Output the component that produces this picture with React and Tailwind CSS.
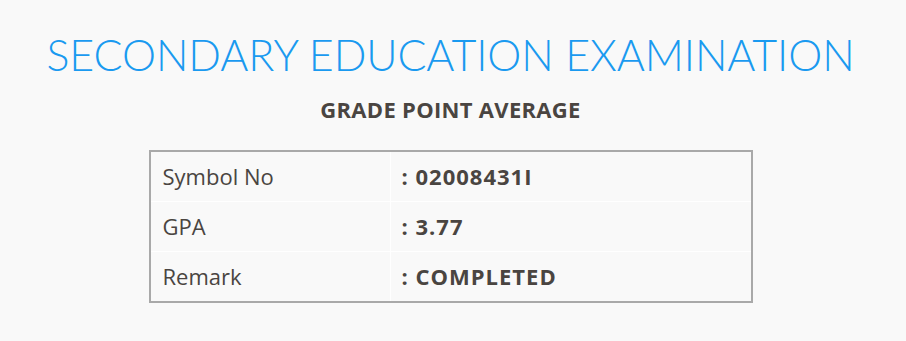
export default function App() {
  const rows = [
    ['Symbol No', '02008431I'],
    ['GPA', '3.77'],
    ['Remark', 'COMPLETED'],
  ]

  return (
    <div className="w-[906px] h-[341px] bg-[#f9f9f9] font-['Open_Sans',sans-serif] text-[#4a4541]">
      <div className="w-[901px] flex flex-col items-center">
        <h1 className="mt-[29px] text-[43px] leading-[52px] font-light tracking-[-0.1px] text-[#1a9af0] font-['Lato',sans-serif]">
          SECONDARY EDUCATION EXAMINATION
        </h1>
        <h2 className="mt-[14px] text-[22px] leading-[28px] font-bold tracking-[0.3px]">GRADE POINT AVERAGE</h2>
        <div className="mt-[27px] w-[604px] border-2 border-[#a9a9a9]">
          {rows.map(([label, value], i) => (
            <div
              key={label}
              className={`flex items-center ${i > 0 ? 'h-[50px] border-t border-white' : 'h-[49px]'}`}
            >
              <div className="w-[240px] h-full flex items-center pl-[12px] text-[22px] border-r border-white">{label}</div>
              <div className="flex-1 pl-[11px] text-[22px] font-bold tracking-[1px]">: {value}</div>
            </div>
          ))}
        </div>
      </div>
    </div>
  )
}
